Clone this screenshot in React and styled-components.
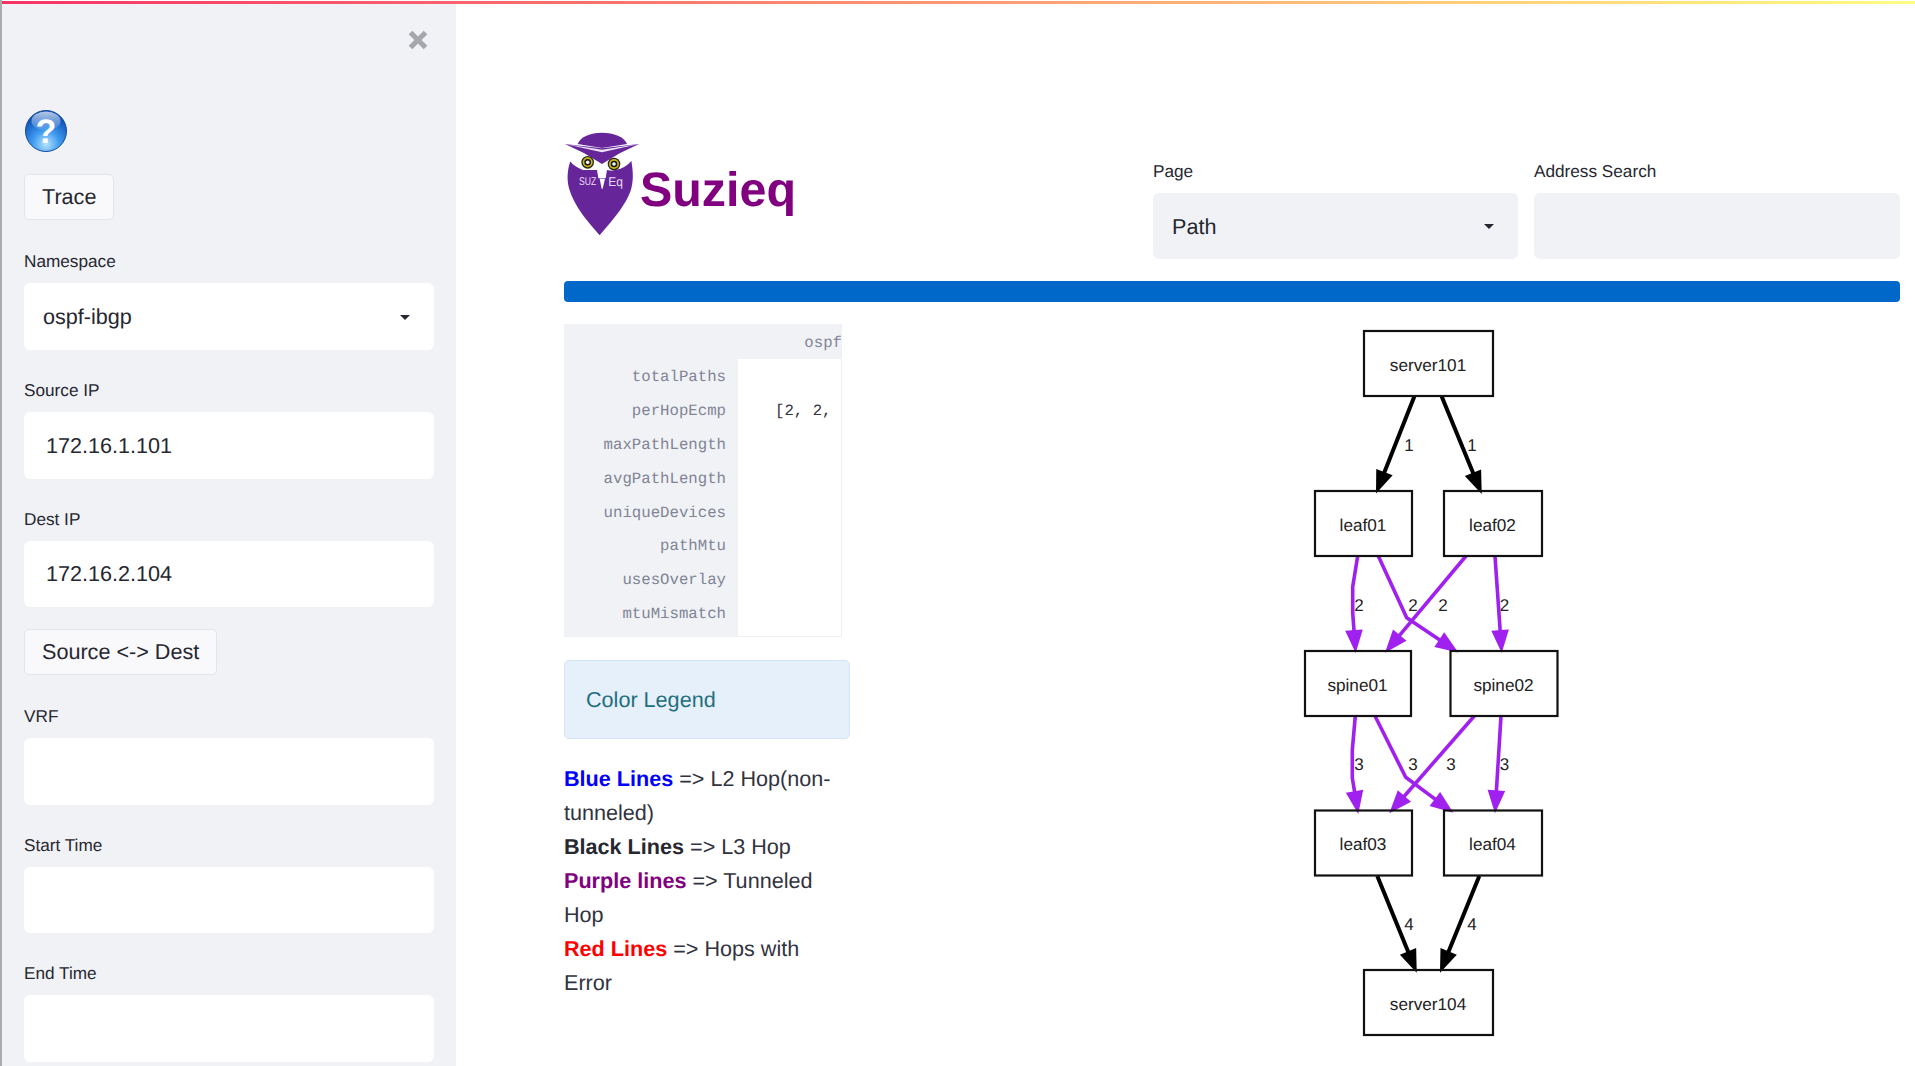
import React from "react";
import styled, { createGlobalStyle } from "styled-components";

const Global = createGlobalStyle`
  html, body { margin: 0; padding: 0; background: #fff; height: 100%; overflow: hidden; }
  body { font-family: "Liberation Sans", Arial, sans-serif; color: #262730; text-rendering: geometricPrecision; }
  * { box-sizing: border-box; }
`;

const Page = styled.div`
  position: relative;
  width: 1915px;
  height: 1066px;
  overflow: hidden;
  border-left: 2px solid #ababab;
  padding-top: 1px;
  background: #fff;
`;
const Sliver = styled.span`
  position: absolute;
  left: -2px;
  width: 2px;
  top: ${(p) => p.$top}px;
  height: ${(p) => p.$height}px;
  background: ${(p) => p.$color};
`;
const Decoration = styled.div`
  height: 3px;
  background: linear-gradient(90deg, #f63366, #fffd80);
`;
const Shell = styled.div`
  display: flex;
  height: 1062px;
`;
const Sidebar = styled.aside`
  width: 454px;
  flex: none;
  background: #f0f2f6;
  padding: 25px 22px 0;
  display: flex;
  flex-direction: column;
  align-items: flex-start;
`;
const CloseRow = styled.div`
  align-self: stretch;
  display: flex;
  justify-content: flex-end;
  height: 80px;
`;
const CloseIcon = styled.svg`
  width: 22px;
  height: 22px;
  margin-right: 5px;
`;
const HelpIcon = styled.svg`
  width: 44px;
  height: 44px;
  margin-bottom: 21px;
  display: block;
`;
const Button = styled.button`
  height: 46px;
  padding: 0 17px;
  background: #f9f9fb;
  border: 1px solid #e4e5ea;
  border-radius: 5px;
  font: 21.6px "Liberation Sans", Arial, sans-serif;
  text-rendering: geometricPrecision;
  color: #262730;
  margin-bottom: ${(p) => p.$after}px;
  display: block;
`;
const Field = styled.div`
  width: ${(p) => p.$width || "100%"};
  margin-bottom: ${(p) => p.$after || 0}px;
`;
const Label = styled.div`
  height: 24px;
  line-height: 25px;
  font-size: 17.2px;
  margin-bottom: 10px;
  color: #262730;
`;
const Select = styled.div`
  height: ${(p) => p.$height || 67}px;
  background: ${(p) => p.$bg || "#fff"};
  border-radius: 6px;
  padding: 1px 18px 0 19px;
  display: flex;
  align-items: center;
  justify-content: space-between;
  font-size: 21.6px;
  color: #262730;
`;
const Caret = styled.span`
  width: 0;
  height: 0;
  border-left: 5px solid transparent;
  border-right: 5px solid transparent;
  border-top: 5px solid #262730;
  margin-right: 6px;
`;
const TextInput = styled.input`
  display: block;
  width: 100%;
  height: ${(p) => p.$height || 66}px;
  border: 0;
  outline: 0;
  background: ${(p) => p.$bg || "#fff"};
  border-radius: 6px;
  padding: 0 22px;
  font: 21.6px "Liberation Sans", Arial, sans-serif;
  text-rendering: geometricPrecision;
  color: #262730;
`;
const Main = styled.main`
  flex: 1;
  min-width: 0;
  padding: 126px 15px 0 108px;
`;
const Header = styled.header`
  display: flex;
  height: 129px;
  align-items: flex-end;
  gap: 16px;
`;
const Brand = styled.div`
  flex: 1;
  align-self: flex-start;
  display: flex;
  align-items: flex-start;
`;
const Owl = styled.svg`
  width: 78px;
  height: 107px;
  flex: none;
  display: block;
  margin-left: -1px;
`;
const BrandName = styled.div`
  font-weight: 700;
  font-size: 48.4px;
  line-height: 55px;
  color: #800080;
  margin: 33px 0 0 -1px;
`;
const Progress = styled.div`
  height: 21px;
  margin: 22px 0;
  background: #0068c9;
  border-radius: 4px;
`;
const Content = styled.div`
  display: flex;
  align-items: flex-start;
`;
const LeftColumn = styled.div`
  width: 286px;
  flex: none;
`;
const Frame = styled.div`
  width: 278px;
  height: 313px;
  display: grid;
  grid-template-columns: 174px 104px;
  grid-template-rows: 35px 1fr;
  background: #f0f2f6;
  border-right: 1px solid #eef0f3;
  border-bottom: 1px solid #eef0f3;
  font: 15.7px "Liberation Mono", monospace;
  overflow: hidden;
`;
const ColumnHead = styled.div`
  grid-column: 2;
  color: #808495;
  line-height: 39px;
  text-align: right;
  white-space: nowrap;
  overflow: hidden;
`;
const RowHeads = styled.div`
  color: #808495;
  text-align: right;
  padding: 2px 12px 0 0;
`;
const Values = styled.div`
  background: #fff;
  color: #31333f;
  white-space: nowrap;
  overflow: hidden;
  padding: 2px 0 0 37px;
`;
const Cell = styled.div`
  height: 33.9px;
  line-height: 33.9px;
`;
const Notice = styled.div`
  height: 79px;
  margin: 23px 0;
  padding: 1px 21px 0;
  display: flex;
  align-items: center;
  background: #e6f0fb;
  border: 1px solid #d3e5f8;
  border-radius: 5px;
  color: #1f6f80;
  font-size: 21.6px;
`;
const Legend = styled.p`
  margin: 0;
  width: 272px;
  font-size: 21.6px;
  line-height: 34px;
  color: #31333f;
`;
const Key = styled.b`
  color: ${(p) => p.$color};
`;
const Graph = styled.svg`
  width: 280px;
  height: 722px;
  margin-left: 440px;
  flex: none;
  display: block;
`;

const nodes = [
  ["server101", 1364, 331, 129, 65, 371],
  ["leaf01", 1315, 491, 97, 65, 531],
  ["leaf02", 1444, 491, 98, 65, 531],
  ["spine01", 1305, 651, 106, 65, 691],
  ["spine02", 1450.5, 651, 107, 65, 691],
  ["leaf03", 1315, 810.5, 97, 65, 850],
  ["leaf04", 1444, 810.5, 98, 65, 850],
  ["server104", 1364, 970, 129, 65, 1010],
];
const BLACK = "#000";
const PURPLE = "#a020f0";
const edges = [
  [BLACK, [[1414.3, 396.5], [1376, 493.5]]],
  [BLACK, [[1441.7, 396.5], [1481.7, 494]]],
  [PURPLE, [[1357.7, 556], [1352.7, 586.7], [1352.7, 613], [1355.7, 653]]],
  [PURPLE, [[1378.3, 556], [1406.7, 617.7], [1458.3, 652.5]]],
  [PURPLE, [[1466, 556], [1385, 652.7]]],
  [PURPLE, [[1495, 556], [1501.7, 653]]],
  [PURPLE, [[1355.3, 716], [1352.3, 750], [1352.3, 778], [1358.3, 814]]],
  [PURPLE, [[1375, 716], [1405.7, 777.3], [1453.3, 812.7]]],
  [PURPLE, [[1474.3, 716], [1389.3, 813.3]]],
  [PURPLE, [[1501, 716], [1495, 813.3]]],
  [BLACK, [[1377.3, 876], [1416.7, 972.7]]],
  [BLACK, [[1479.3, 876], [1440, 972.7]]],
];
const edgeLabels = [
  ["1", 1409, 451], ["1", 1472, 451],
  ["2", 1359, 611], ["2", 1413, 611], ["2", 1443, 611], ["2", 1504.5, 611],
  ["3", 1359, 770], ["3", 1413, 770], ["3", 1451, 770], ["3", 1504.5, 770],
  ["4", 1409, 930], ["4", 1472, 930],
];

function Edge({ color, points }) {
  const tip = points[points.length - 1];
  const prev = points[points.length - 2];
  const dx = tip[0] - prev[0];
  const dy = tip[1] - prev[1];
  const len = Math.hypot(dx, dy);
  const ux = dx / len;
  const uy = dy / len;
  const L = 23;
  const W = 8.8;
  const bx = tip[0] - ux * L;
  const by = tip[1] - uy * L;
  const line = points.slice(0, -1).concat([[bx + ux * 2, by + uy * 2]]);
  return (
    <g>
      <polyline
        points={line.map((p) => p.join(",")).join(" ")}
        fill="none"
        stroke={color}
        strokeWidth={color === BLACK ? 4 : 3.6}
        strokeLinejoin="round"
      />
      <polygon
        points={`${tip[0]},${tip[1]} ${bx - uy * W},${by + ux * W} ${bx + uy * W},${by - ux * W}`}
        fill={color}
      />
    </g>
  );
}

const rows = ["totalPaths", "perHopEcmp", "maxPathLength", "avgPathLength", "uniqueDevices", "pathMtu", "usesOverlay", "mtuMismatch"];
const values = ["", "[2, 2,", "", "", "", "", "", ""];
const slivers = [
  [10, 2, "#222"],
  [205, 40, "#c4c5c8"],
  [266, 12, "#0f68c4"],
  [950, 22, "#1d4f9a"],
  [1008, 10, "#a8631f"],
];

export default function App() {
  return (
    <Page>
      <Global />
      {slivers.map(([top, height, color]) => (
        <Sliver key={top} $top={top} $height={height} $color={color} />
      ))}
      <Decoration />
      <Shell>
        <Sidebar>
          <CloseRow>
            <CloseIcon viewBox="0 0 22 22">
              <path d="M3.5 3.5 L18.5 18.5 M18.5 3.5 L3.5 18.5" stroke="#a6a7ad" strokeWidth="5.2" fill="none" />
            </CloseIcon>
          </CloseRow>
          <HelpIcon viewBox="0 0 44 44">
            <defs>
              <radialGradient id="sphere" cx="50%" cy="82%" r="72%">
                <stop offset="0%" stopColor="#b5e4ff" />
                <stop offset="45%" stopColor="#3f9bf0" />
                <stop offset="100%" stopColor="#0c4fb6" />
              </radialGradient>
              <linearGradient id="gloss" x1="0" y1="0" x2="0" y2="1">
                <stop offset="0%" stopColor="#fff" stopOpacity="0.7" />
                <stop offset="100%" stopColor="#fff" stopOpacity="0.05" />
              </linearGradient>
            </defs>
            <circle cx="22" cy="22" r="20.5" fill="url(#sphere)" stroke="#1c4d9e" strokeWidth="1" />
            <ellipse cx="22" cy="12" rx="14.5" ry="9.5" fill="url(#gloss)" />
            <text x="22" y="34" textAnchor="middle" fontFamily="Liberation Sans" fontWeight="700" fontSize="34" fill="#fff">?</text>
          </HelpIcon>
          <Button $after={29}>Trace</Button>
          <Field $after={28}>
            <Label>Namespace</Label>
            <Select>ospf-ibgp<Caret /></Select>
          </Field>
          <Field $after={28}>
            <Label>Source IP</Label>
            <TextInput readOnly value="172.16.1.101" $height={67} />
          </Field>
          <Field $after={22}>
            <Label>Dest IP</Label>
            <TextInput readOnly value="172.16.2.104" />
          </Field>
          <Button $after={29}>Source &lt;-&gt; Dest</Button>
          <Field $after={28}>
            <Label>VRF</Label>
            <TextInput readOnly value="" $height={67} />
          </Field>
          <Field $after={28}>
            <Label>Start Time</Label>
            <TextInput readOnly value="" />
          </Field>
          <Field>
            <Label>End Time</Label>
            <TextInput readOnly value="" $height={67} />
          </Field>
        </Sidebar>
        <Main>
          <Header>
            <Brand>
              <Owl viewBox="40 30 234 321">
                <path d="M84 72 C92 50 122 38 157 38 C192 38 224 50 232 72 L157 84 Z" fill="#66269a" />
                <path d="M46 72 L157 85 L268 72 L210 100 L157 132 L104 100 Z" fill="#66269a" />
                <path d="M46 72 L157 89 L268 72 L157 97 Z" fill="#ece2f3" />
                <path d="M62 124 C66 132 80 142 100 150 L130 148 L157 150 L186 150 L212 146 C226 140 238 132 245 122 C250 150 252 178 245 205 C232 255 180 310 150 346 C118 310 72 258 58 205 C51 178 53 150 62 124 Z" fill="#66269a" />
                <path d="M100 110 L157 135 L212 112 L212 146 L186 152 L172 150 L168 175 L146 175 L142 150 L126 150 L100 150 Z" fill="#fff" />
                <circle cx="114" cy="127" r="19" fill="#2b2716" />
                <circle cx="114" cy="127" r="15" fill="#c9b81e" />
                <circle cx="114" cy="127" r="10" fill="#161616" />
                <circle cx="114" cy="127" r="5.5" fill="#f4f4f4" />
                <circle cx="193" cy="132" r="19" fill="#2b2716" />
                <circle cx="193" cy="132" r="15" fill="#c9b81e" />
                <circle cx="193" cy="132" r="10" fill="#161616" />
                <circle cx="193" cy="132" r="5.5" fill="#f4f4f4" />
                <text x="88" y="196" fontFamily="Liberation Sans" fontSize="34" fill="#eadcf3" textLength="52" lengthAdjust="spacingAndGlyphs">SUZ</text>
                <path d="M150 176 L166 176 L159 206 L156 206 Z" fill="#fff" />
                <text x="176" y="198" fontFamily="Liberation Sans" fontSize="38" fill="#eadcf3" textLength="44" lengthAdjust="spacingAndGlyphs">Eq</text>
              </Owl>
              <BrandName>Suzieq</BrandName>
            </Brand>
            <Field $width="365px">
              <Label>Page</Label>
              <Select $bg="#f0f2f6" $height={66}>Path<Caret /></Select>
            </Field>
            <Field $width="366px">
              <Label>Address Search</Label>
              <TextInput readOnly value="" $bg="#f0f2f6" />
            </Field>
          </Header>
          <Progress />
          <Content>
            <LeftColumn>
              <Frame>
                <ColumnHead>ospf</ColumnHead>
                <RowHeads>{rows.map((r) => <Cell key={r}>{r}</Cell>)}</RowHeads>
                <Values>{values.map((v, i) => <Cell key={i}>{v}</Cell>)}</Values>
              </Frame>
              <Notice>Color Legend</Notice>
              <Legend>
                <Key $color="#0000ff">Blue Lines</Key> =&gt; L2 Hop(non-tunneled)<br />
                <Key $color="#262730">Black Lines</Key> =&gt; L3 Hop<br />
                <Key $color="#800080">Purple lines</Key> =&gt; Tunneled Hop<br />
                <Key $color="#ff0000">Red Lines</Key> =&gt; Hops with Error
              </Legend>
            </LeftColumn>
            <Graph viewBox="1290 324 280 722">
              {edges.map(([c, p], i) => <Edge key={i} color={c} points={p} />)}
              {nodes.map(([name, x, y, w, h, base]) => (
                <g key={name}>
                  <rect x={x} y={y} width={w} height={h} fill="none" stroke="#111" strokeWidth="2.2" />
                  <text x={x + w / 2 - 0.5} y={base} textAnchor="middle" fontFamily="Liberation Sans" fontSize="17.2" fill="#222">{name}</text>
                </g>
              ))}
              {edgeLabels.map(([t, x, y], i) => (
                <text key={i} x={x} y={y} textAnchor="middle" fontFamily="Liberation Sans" fontSize="17" fill="#222">{t}</text>
              ))}
            </Graph>
          </Content>
        </Main>
      </Shell>
    </Page>
  );
}
